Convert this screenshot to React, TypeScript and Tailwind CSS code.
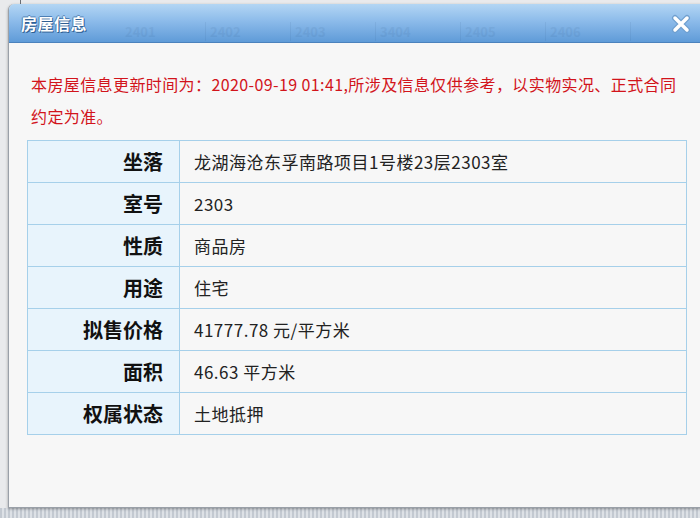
const rows = [
  { label: "坐落", value: "龙湖海沧东孚南路项目1号楼23层2303室" },
  { label: "室号", value: "2303" },
  { label: "性质", value: "商品房" },
  { label: "用途", value: "住宅" },
  { label: "拟售价格", value: "41777.78 元/平方米" },
  { label: "面积", value: "46.63 平方米" },
  { label: "权属状态", value: "土地抵押" },
];

const ghostRooms = ["2401", "2402", "2403", "3404", "2405", "2406"];

function CloseIcon() {
  return (
    <svg width="22" height="22" viewBox="0 0 22 22">
      <g strokeLinecap="round">
        <path d="M5 5 L17 17 M17 5 L5 17" stroke="#6f9fcf" strokeWidth="6" />
        <path d="M5 5 L17 17 M17 5 L5 17" stroke="#ffffff" strokeWidth="3.5" />
      </g>
    </svg>
  );
}

export default function App() {
  return (
    <div
      className="relative w-[700px] h-[518px] overflow-hidden bg-[#e9eaec]"
      style={{ fontFamily: '"Noto Sans CJK SC", "Liberation Sans", sans-serif' }}
    >
      {/* page behind the dialog */}
      <div className="absolute left-[20px] top-0 bottom-0 w-px bg-[#6b6f75]"></div>
      <div className="absolute left-0 right-0 bottom-0 h-[10px] bg-[repeating-linear-gradient(90deg,#c3c9d1_0px,#c3c9d1_2px,#dde1e6_2px,#dde1e6_4px)]"></div>

      {/* dialog window */}
      <div className="relative ml-[8px] mt-[4px] w-[700px] h-[504px] bg-[#f7f7f7] rounded-tl-[6px] border-l border-b border-[#9aa0a8] shadow-[0_1px_3px_rgba(0,0,0,0.35)] overflow-hidden">
        {/* title bar */}
        <div className="relative h-[39px] flex items-center justify-between pl-[12px] pr-[16px] bg-[linear-gradient(to_bottom,#b3d6f4,#8cbbea_45%,#5f9bd8)] border-b border-[#4b82bd]">
          <div className="absolute left-[112px] bottom-[1px] flex opacity-[0.07] text-[#1a3c66] text-[13px] font-bold">
            {ghostRooms.map((r) => (
              <span key={r} className="w-[85px] border-r border-[#1a3c66] pl-[4px]">
                {r}
              </span>
            ))}
          </div>
          <span className="relative text-white text-[16px] font-bold tracking-[0.5px] [text-shadow:1px_1px_0_#2f5f92,-1px_0_0_#4d7fb5,0_-1px_0_#4d7fb5]">
            房屋信息
          </span>
          <span className="relative mt-[1px]">
            <CloseIcon />
          </span>
        </div>

        {/* notice */}
        <p className="pt-[25px] pl-[22px] w-[690px] text-[16px] leading-[32px] tracking-[0.4px] text-[#d2141b]">
          本房屋信息更新时间为：2020-09-19 01:41,所涉及信息仅供参考，以实物实况、正式合同
          <br />
          约定为准。
        </p>

        {/* info table */}
        <table className="mt-[8px] ml-[18px] w-[660px] border-collapse">
          <tbody>
            {rows.map((row) => (
              <tr key={row.label} className="h-[42px]">
                <td className="w-[152px] bg-[#e8f4fc] border border-[#a6d0ea] pr-[16px] text-right text-[20px] font-bold text-[#111]">
                  {row.label}
                </td>
                <td className="bg-[#f7f7f7] border border-[#a6d0ea] pl-[14px] text-[17px] tracking-[0.5px] text-[#222]">
                  {row.value}
                </td>
              </tr>
            ))}
          </tbody>
        </table>
      </div>
    </div>
  );
}
